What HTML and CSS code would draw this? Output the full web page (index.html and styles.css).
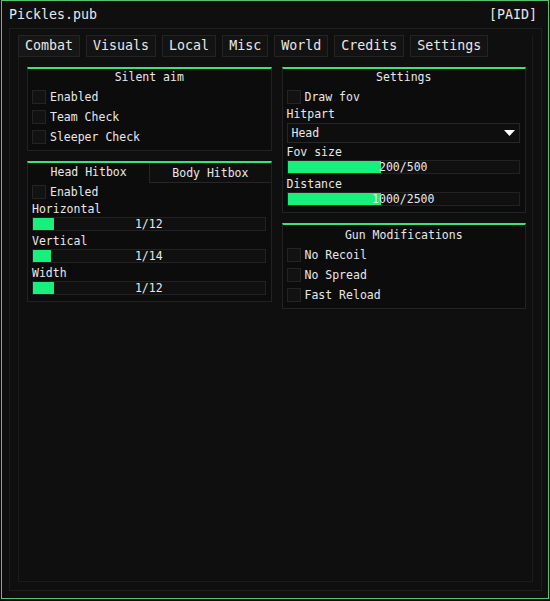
FILE: index.html
```html
<!DOCTYPE html>
<html>
<head>
<meta charset="utf-8">
<link rel="stylesheet" href="styles.css">
</head>
<body>
<div class="window">
  <div class="titlebar">
    <span>Pickles.pub</span>
    <span>[PAID]</span>
  </div>
  <div class="panel">
    <div class="frame">
      <div class="tabs">
        <div class="tab active">Combat</div>
        <div class="tab">Visuals</div>
        <div class="tab">Local</div>
        <div class="tab">Misc</div>
        <div class="tab">World</div>
        <div class="tab">Credits</div>
        <div class="tab">Settings</div>
      </div>
      <div class="content">
        <div class="column">
          <div class="group">
            <div class="group-title">Silent aim</div>
            <div class="group-body">
              <div class="check-row"><span class="checkbox"></span>Enabled</div>
              <div class="check-row"><span class="checkbox"></span>Team Check</div>
              <div class="check-row"><span class="checkbox"></span>Sleeper Check</div>
            </div>
          </div>
          <div class="group">
            <div class="subtabs">
              <div class="subtab active">Head Hitbox</div>
              <div class="subtab">Body Hitbox</div>
            </div>
            <div class="group-body compact">
              <div class="check-row short"><span class="checkbox"></span>Enabled</div>
              <div class="field-label">Horizontal</div>
              <div class="slider"><div class="fill" style="width:21px"></div><div class="slider-text">1/12</div></div>
              <div class="field-label">Vertical</div>
              <div class="slider"><div class="fill" style="width:18px"></div><div class="slider-text">1/14</div></div>
              <div class="field-label">Width</div>
              <div class="slider"><div class="fill" style="width:21px"></div><div class="slider-text">1/12</div></div>
            </div>
          </div>
        </div>
        <div class="column">
          <div class="group">
            <div class="group-title">Settings</div>
            <div class="group-body compact">
              <div class="check-row short"><span class="checkbox"></span>Draw fov</div>
              <div class="field-label">Hitpart</div>
              <div class="dropdown">
                <span>Head</span>
                <svg class="arrow" width="11" height="6" viewBox="0 0 11 6"><polygon points="0,0 11,0 5.5,6" fill="#ffffff"/></svg>
              </div>
              <div class="field-label">Fov size</div>
              <div class="slider"><div class="fill" style="width:93px"></div><div class="slider-text">200/500</div></div>
              <div class="field-label">Distance</div>
              <div class="slider"><div class="fill" style="width:93px"></div><div class="slider-text">1000/2500</div></div>
            </div>
          </div>
          <div class="group">
            <div class="group-title gun">Gun Modifications</div>
            <div class="group-body">
              <div class="check-row"><span class="checkbox"></span>No Recoil</div>
              <div class="check-row"><span class="checkbox"></span>No Spread</div>
              <div class="check-row"><span class="checkbox"></span>Fast Reload</div>
            </div>
          </div>
        </div>
      </div>
    </div>
  </div>
</div>
</body>
</html>
```
FILE: styles.css
```css
html, body {
  margin: 0;
  padding: 0;
  background: #0d0d0d;
}

body {
  font-family: "DejaVu Sans Mono", "Liberation Mono", monospace;
  color: #e8e8e8;
  font-size: 11.5px;
}

.window {
  margin-left: 1px;
  width: 548px;
  height: 599px;
  box-sizing: border-box;
  border: 1px solid #52c473;
  background: #0f0f0f;
  padding: 0 6px 7px 7px;
  display: flex;
  flex-direction: column;
}

.titlebar {
  height: 27px;
  display: flex;
  align-items: center;
  justify-content: space-between;
  font-size: 13.3px;
  padding-right: 5px;
}

.panel {
  flex: 1;
  border: 1px solid #1e1e1e;
  padding: 6px 8px 8px 8px;
  display: flex;
}

.frame {
  flex: 1;
  border: 1px solid #1b1b1b;
  border-top: none;
  display: flex;
  flex-direction: column;
}

.tabs {
  display: flex;
  gap: 6px;
  margin-left: -1px;
}

.tab {
  height: 22px;
  box-sizing: border-box;
  border: 1px solid #242424;
  background: #131313;
  padding: 0 6px;
  font-size: 13.3px;
  line-height: 20px;
}

.tab.active {
  background: #161616;
}

.content {
  flex: 1;
  display: grid;
  grid-template-columns: 1fr 1fr;
  column-gap: 10px;
  align-items: start;
  padding: 10px 6px 9px 8px;
}

.column {
  display: flex;
  flex-direction: column;
  gap: 10px;
}

.group {
  border: 1px solid #222222;
  border-top: 2px solid #38e47f;
  background: #0c0c0c;
}

.group-title {
  line-height: 16px;
  text-align: center;
  margin-bottom: 2px;
}

.group-title.gun {
  line-height: 18px;
  margin-bottom: 0;
  padding-top: 1px;
  margin-bottom: 1px;
}

.group-body {
  padding: 0 5px 3px 4px;
  display: flex;
  flex-direction: column;
}

.group-body.compact {
  padding-bottom: 6px;
}

.check-row {
  height: 20px;
  display: flex;
  align-items: center;
}

.check-row.short {
  height: 19px;
}

.checkbox {
  width: 14px;
  height: 14px;
  box-sizing: border-box;
  border: 1px solid #242424;
  background: #121212;
  margin-right: 4px;
}

.subtabs {
  display: grid;
  grid-template-columns: 1fr 1fr;
  height: 19px;
}

.subtab {
  text-align: center;
  line-height: 18px;
  box-sizing: border-box;
}

.subtab:not(.active) {
  border-left: 1px solid #262626;
  border-bottom: 1px solid #262626;
  border-top: 1px solid #1a1a1a;
  background: #0f0f0f;
}

.field-label {
  line-height: 16px;
  height: 16px;
}

.slider {
  height: 14px;
  box-sizing: border-box;
  border: 1px solid #222222;
  background: #101010;
  display: grid;
  margin-bottom: 2px;
}

.slider:last-child {
  margin-bottom: 0;
}

.fill,
.slider-text {
  grid-area: 1 / 1;
}

.fill {
  height: 12px;
  background: #17f07c;
}

.slider-text {
  text-align: center;
  line-height: 12px;
}

.dropdown {
  height: 20px;
  box-sizing: border-box;
  border: 1px solid #262626;
  background: #0e0e0e;
  padding: 0 4px;
  margin-top: 1px;
  margin-bottom: 1px;
  display: flex;
  align-items: center;
  justify-content: space-between;
}

.arrow {
  display: block;
}
```
